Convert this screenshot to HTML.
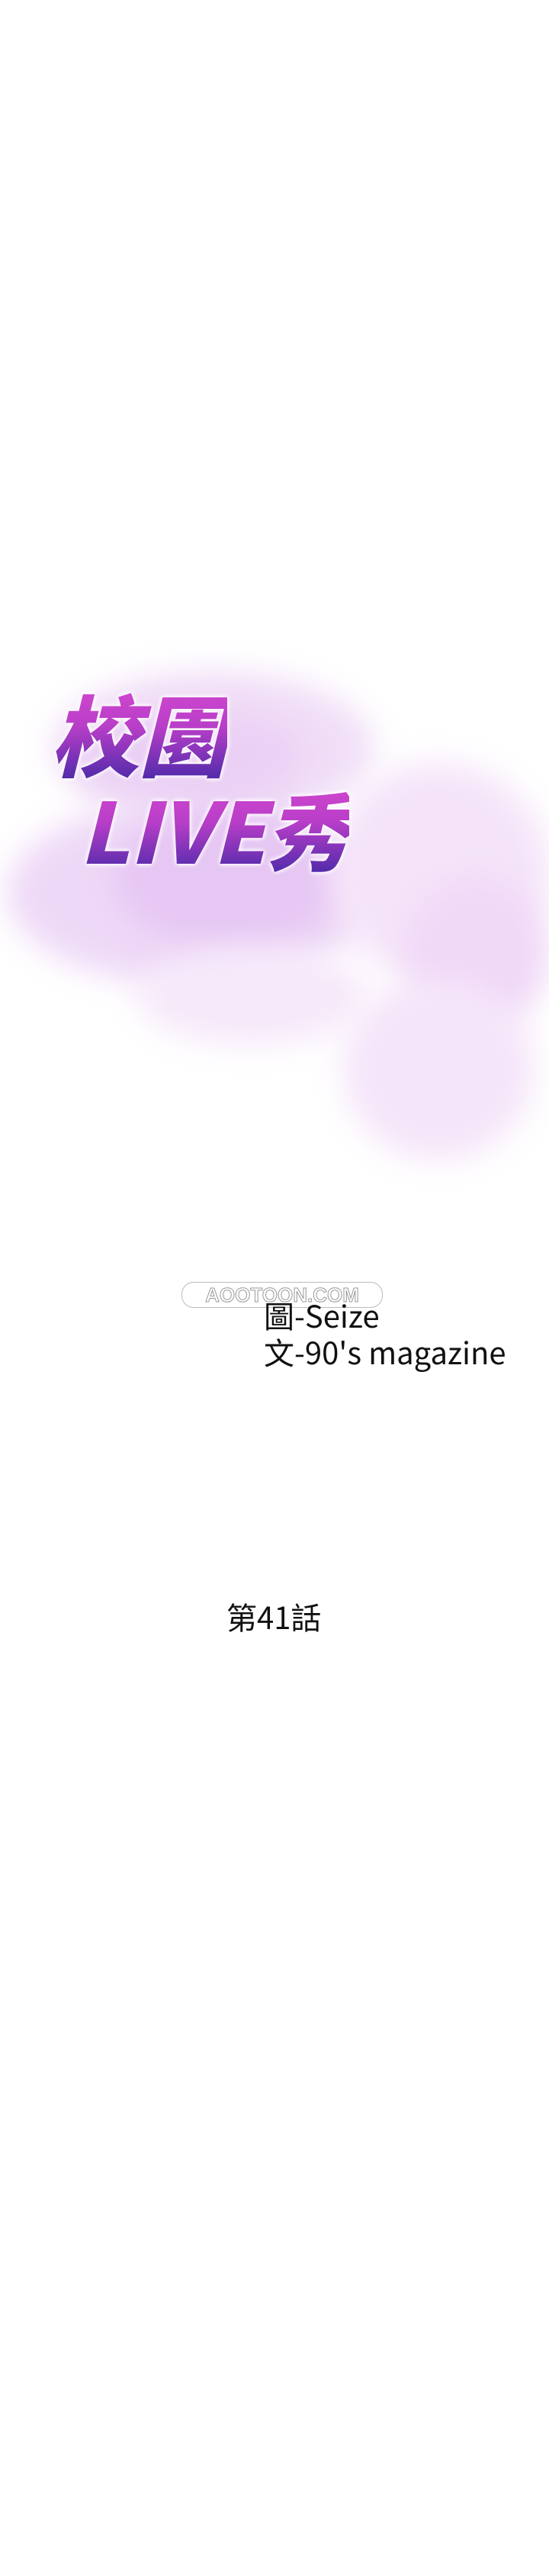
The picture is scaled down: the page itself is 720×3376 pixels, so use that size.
<!DOCTYPE html>
<html><head><meta charset="utf-8"><style>
html,body{margin:0;padding:0;background:#fff;}
body{width:720px;height:3376px;position:relative;overflow:hidden;font-family:"Noto Sans CJK TC",sans-serif;}
.blob{position:absolute;border-radius:50%;filter:blur(20px);}
.t{position:absolute;font-family:"Noto Sans CJK TC",sans-serif;font-weight:900;white-space:nowrap;
background:linear-gradient(180deg,#d548d0 0%,#b83ec8 45%,#4a2aa8 100%);-webkit-background-clip:text;background-clip:text;color:transparent;
filter:drop-shadow(0 0 3px #fff) drop-shadow(0 0 2px #fff);font-style:italic;}
.txt{position:absolute;color:#111;font-family:"Noto Sans CJK TC",sans-serif;white-space:nowrap;}
</style></head><body>
<div class="blob" style="left:70px;top:880px;width:420px;height:200px;background:#f1def7;"></div>
<div class="blob" style="left:100px;top:930px;width:300px;height:120px;background:#ebd0f5;"></div>
<div class="blob" style="left:10px;top:1050px;width:480px;height:240px;background:#eed8f7;"></div>
<div class="blob" style="left:150px;top:1060px;width:300px;height:180px;background:#e6c6f3;"></div>
<div class="blob" style="left:430px;top:1000px;width:290px;height:280px;background:#f5e4f9;"></div>
<div class="blob" style="left:530px;top:1150px;width:190px;height:200px;background:#f0d8f7;"></div>
<div class="blob" style="left:180px;top:1240px;width:300px;height:130px;background:#f6e9fa;"></div>
<div class="blob" style="left:450px;top:1280px;width:250px;height:240px;background:#f5e5f9;"></div>
<div class="t" style="left:66px;top:892px;font-size:116px;line-height:134px;">校園</div>
<div class="t" style="left:104px;top:1020px;font-size:110px;line-height:128px;">LIVE秀</div>
<div style="position:absolute;left:238px;top:1680px;width:262px;height:32px;border-radius:16px;border:1px solid #bbb;color:#fff;font:bold 26px/32px 'Liberation Sans',sans-serif;text-align:center;-webkit-text-stroke:1px #999;">AOOTOON.COM</div>
<div class="txt" style="left:346px;top:1698px;font-size:40px;line-height:50px;">圖-Seize</div>
<div class="txt" style="left:346px;top:1746px;font-size:40px;line-height:50px;">文-90's magazine</div>
<div class="txt" style="left:297px;top:2092px;font-size:40px;line-height:52px;">第41話</div>
</body></html>
